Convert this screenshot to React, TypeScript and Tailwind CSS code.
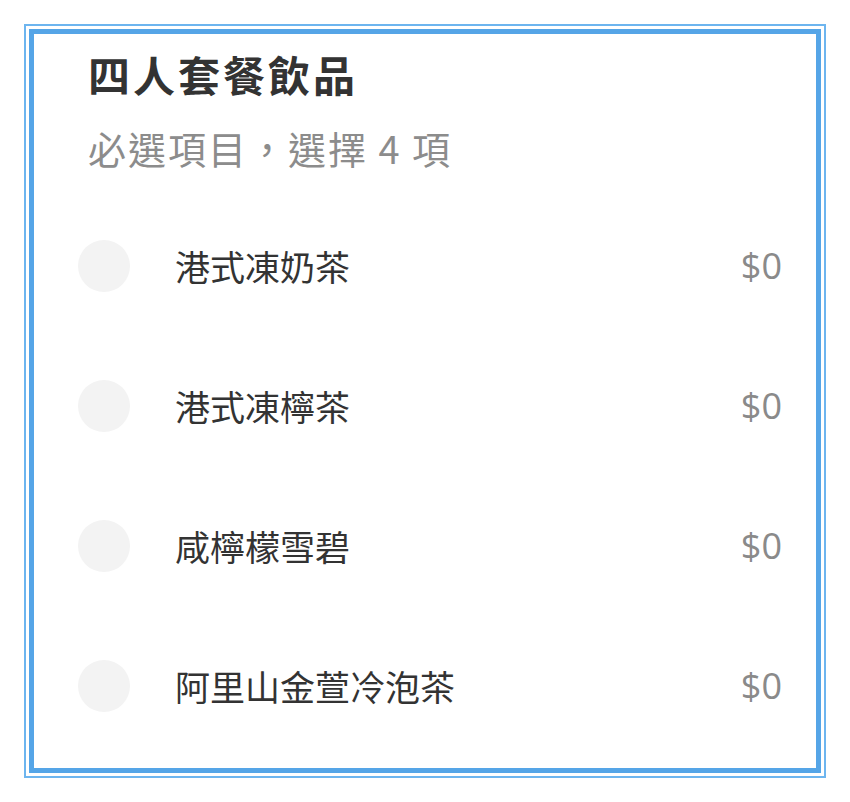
const ITEMS = ["港式凍奶茶", "港式凍檸茶", "咸檸檬雪碧", "阿里山金萱冷泡茶"];

const CJK = "font-['Noto_Sans_CJK_TC','Noto_Sans',sans-serif]";

export default function App() {
  return (
    <div className="w-[850px] h-[802px] bg-white pt-[24px] pl-[24px]">
      <div className="w-[802px] h-[754px] border-2 border-[#6db5ef] p-[3px]">
        <div className={`h-full border-[5px] border-[#55a5e7] bg-white ${CJK}`}>
          <div className="pl-[54px] pt-[18px]">
            <h2 className="text-[42px] leading-[44px] font-bold text-[#333333] tracking-[3px]">
              四人套餐飲品
            </h2>
            <p className="mt-[30px] text-[38px] leading-[44px] text-[#8c8c8c] tracking-[2px]">
              必選項目，選擇 4 項
            </p>
          </div>
          <ul className="mt-[26px]">
            {ITEMS.map((item) => (
              <li key={item} className="h-[140px] flex items-center pl-[44px] pr-[34px]">
                <span className="w-[52px] h-[52px] rounded-full bg-[#f3f3f3] shrink-0" />
                <span className="ml-[45px] flex-1 text-[35px] text-[#333333]">{item}</span>
                <span className="text-[36px] text-[#8a8a8a] font-['Open_Sans',sans-serif]">$0</span>
              </li>
            ))}
          </ul>
        </div>
      </div>
    </div>
  );
}
